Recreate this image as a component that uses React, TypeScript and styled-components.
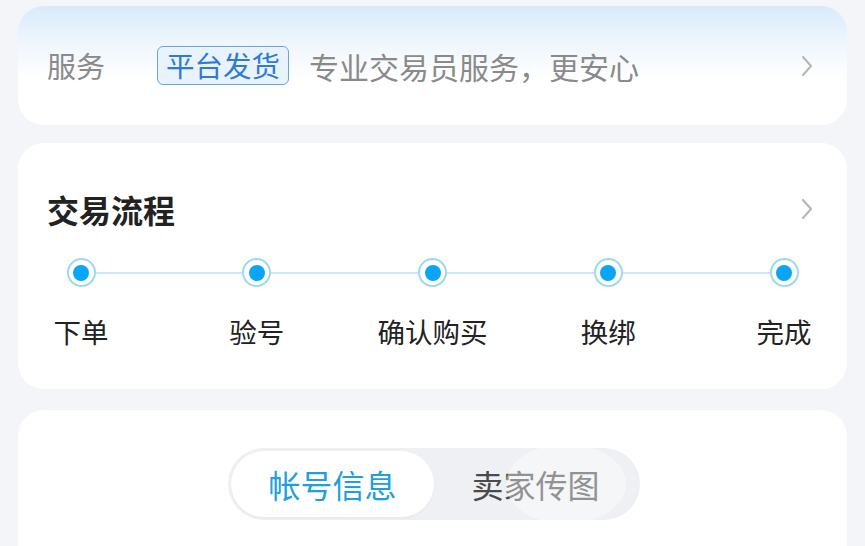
import * as React from "react";
import styled, { createGlobalStyle } from "styled-components";

const COLORS = {
  page: "#f4f5f9",
  white: "#ffffff",
  gray: "#8a8a8a",
  dark: "#222222",
  chevron: "#b8b8bc",
  blue: "#1f9fdf",
  badgeText: "#2f7ad6",
  dot: "#0aa6f5",
  ring: "#9ed8f1",
  line: "#cde8f5",
};

const STEPS = ["下单", "验号", "确认购买", "换绑", "完成"];

const GlobalStyle = createGlobalStyle`
  html, body {
    margin: 0;
    padding: 0;
    background: ${COLORS.page};
    font-family: "Noto Sans CJK SC", "Noto Sans", sans-serif;
  }
  * { box-sizing: border-box; }
`;

function Chevron() {
  return (
    <ChevronSvg viewBox="0 0 12 22" width="12" height="22">
      <path d="M2 2 L10 11 L2 20" fill="none" stroke={COLORS.chevron} strokeWidth="2.2" strokeLinecap="round" strokeLinejoin="round" />
    </ChevronSvg>
  );
}

export default function App() {
  return (
    <>
      <GlobalStyle />
      <Page>
        <ServiceCard>
          <ServiceLabel>服务</ServiceLabel>
          <Badge>平台发货</Badge>
          <ServiceText>专业交易员服务，更安心</ServiceText>
          <Chevron />
        </ServiceCard>

        <FlowCard>
          <FlowHeader>
            <FlowTitle>交易流程</FlowTitle>
            <Chevron />
          </FlowHeader>
          <Steps>
            {STEPS.map((s) => (
              <Step key={s}>
                <Dot />
                <StepLabel>{s}</StepLabel>
              </Step>
            ))}
          </Steps>
        </FlowCard>

        <InfoCard>
          <Tabs>
            <Tab active>帐号信息</Tab>
            <Tab>卖家传图</Tab>
            <Watermark />
          </Tabs>
        </InfoCard>
      </Page>
    </>
  );
}

const Page = styled.div`
  width: 865px;
  height: 546px;
  overflow: hidden;
  padding: 6px 18px 0;
  display: flex;
  flex-direction: column;
`;

const Card = styled.div`
  background: ${COLORS.white};
  border-radius: 26px;
`;

const ServiceCard = styled(Card)`
  height: 119px;
  background: linear-gradient(180deg, #d8ebfb 0%, #eef6fd 30%, #ffffff 62%);
  display: flex;
  align-items: center;
  padding: 0 34px 0 29px;
`;

const ServiceLabel = styled.span`
  width: 110px;
  font-size: 29px;
  color: ${COLORS.gray};
  line-height: 1;
`;

const Badge = styled.span`
  font-size: 28.5px;
  line-height: 1;
  color: ${COLORS.badgeText};
  background: #e9f3fd;
  border: 1.5px solid #6aa6d8;
  border-radius: 6px;
  padding: 4px 8px 5px;
`;

const ServiceText = styled.span`
  flex: 1;
  margin-left: 20px;
  font-size: 30px;
  line-height: 1;
  color: ${COLORS.gray};
`;

const ChevronSvg = styled.svg`
  flex-shrink: 0;
  display: block;
`;

const FlowCard = styled(Card)`
  margin-top: 18px;
  height: 246px;
  padding: 46px 34px 0 29px;
`;

const FlowHeader = styled.div`
  display: flex;
  align-items: center;
  justify-content: space-between;
  height: 40px;
`;

const FlowTitle = styled.h2`
  margin: 0;
  font-size: 32px;
  font-weight: 700;
  color: ${COLORS.dark};
  line-height: 1;
`;

const Steps = styled.div`
  position: relative;
  margin: 29px 1px 0 6px;
  display: flex;
  justify-content: space-between;

  &::before {
    content: "";
    position: absolute;
    left: 28px;
    right: 28px;
    top: 14px;
    height: 2px;
    background: ${COLORS.line};
  }
`;

const Step = styled.div`
  position: relative;
  width: 56px;
  display: flex;
  flex-direction: column;
  align-items: center;
`;

const Dot = styled.span`
  width: 29px;
  height: 29px;
  border-radius: 50%;
  border: 2.5px solid ${COLORS.ring};
  background: ${COLORS.white};
  display: flex;
  align-items: center;
  justify-content: center;

  &::after {
    content: "";
    width: 16px;
    height: 16px;
    border-radius: 50%;
    background: ${COLORS.dot};
  }
`;

const StepLabel = styled.span`
  margin-top: 31px;
  white-space: nowrap;
  font-size: 27.5px;
  line-height: 1;
  color: ${COLORS.dark};
`;

const InfoCard = styled(Card)`
  margin-top: 21px;
  flex: 1;
  border-radius: 26px 26px 0 0;
  padding-top: 38px;
  display: flex;
  justify-content: center;
`;

const Tabs = styled.div`
  position: relative;
  width: 412px;
  height: 72px;
  margin-left: 3px;
  border-radius: 36px;
  background: #eef0f4;
  padding: 3px;
  display: flex;
`;

const Tab = styled.div<{ active?: boolean }>`
  width: 203px;
  height: 66px;
  border-radius: 33px;
  display: flex;
  align-items: center;
  justify-content: center;
  font-size: 32px;
  color: ${(p) => (p.active ? COLORS.blue : "#4a4a4a")};
  background: ${(p) => (p.active ? COLORS.white : "transparent")};
  box-shadow: ${(p) => (p.active ? "0 1px 3px rgba(0,0,0,0.04)" : "none")};
`;

const Watermark = styled.span`
  position: absolute;
  left: 278px;
  top: -4px;
  width: 120px;
  height: 80px;
  border-radius: 50%;
  background: rgba(255, 255, 255, 0.4);
  pointer-events: none;
`;
